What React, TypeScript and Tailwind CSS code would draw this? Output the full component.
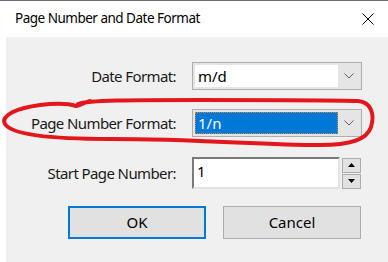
import React from "react";

const font = { fontFamily: '"Noto Sans", "Open Sans", sans-serif' };

function Chevron() {
  return (
    <svg width="10" height="6" viewBox="0 0 10 6" className="block">
      <path d="M0.5 0.5 L5 5 L9.5 0.5" fill="none" stroke="#606060" strokeWidth="1" />
    </svg>
  );
}

function Combo({ value, focused }: { value: string; focused?: boolean }) {
  return (
    <div className="flex h-[28px] w-[170px] border border-[#adadad] bg-[#e5e5e5] p-[2px]">
      {focused ? (
        <div className="flex h-full w-[143px] items-center border border-dotted border-[#d9883a] bg-[#0078d7] pl-[2px] text-white">
          {value}
        </div>
      ) : (
        <div className="flex h-full w-[143px] items-center bg-white pl-[3px] text-black">{value}</div>
      )}
      <div className="flex flex-1 items-center justify-center">
        <Chevron />
      </div>
    </div>
  );
}

function SpinButton({ up }: { up?: boolean }) {
  return (
    <div className="flex h-[15px] w-[19px] items-center justify-center border border-[#adadad] bg-[#e1e1e1]">
      <svg width="7" height="4" viewBox="0 0 7 4" className="block">
        {up ? <path d="M0 4 L3.5 0 L7 4 Z" fill="#000" /> : <path d="M0 0 L7 0 L3.5 4 Z" fill="#000" />}
      </svg>
    </div>
  );
}

export default function App() {
  return (
    <div className="relative h-[262px] w-[388px] overflow-hidden bg-white text-[15px] leading-none text-[#1a1a1a]" style={font}>
      <div className="h-px bg-[#6f6f6f]" />
      <div className="flex h-[36px] items-center justify-between pl-[15px] pr-[14px]">
        <span className="text-[13.5px] tracking-[-0.5px] text-black">Page Number and Date Format</span>
        <svg width="12" height="12" viewBox="0 0 12 12" className="block">
          <path d="M0.5 0.5 L11.5 11.5 M11.5 0.5 L0.5 11.5" stroke="#000" strokeWidth="1" />
        </svg>
      </div>
      <div className="ml-[6px] h-[225px] bg-[#f0f0f0] pt-[25px]">
        <div className="flex h-[28px] items-center gap-[16px]">
          <span className="w-[170px] text-right tracking-[-0.6px]">Date Format:</span>
          <Combo value="m/d" />
        </div>
        <div className="mt-[19px] flex h-[28px] items-center gap-[16px]">
          <span className="w-[170px] text-right tracking-[-0.6px]">Page Number Format:</span>
          <Combo value="1/n" focused />
        </div>
        <div className="mt-[20px] flex h-[32px] items-center gap-[16px]">
          <span className="w-[170px] text-right tracking-[-0.6px]">Start Page Number:</span>
          <div className="flex items-center gap-[2px]">
            <div className="h-[32px] w-[148px] border-2 border-b-[#e3e3e3] border-l-[#7a7a7a] border-r-[#e3e3e3] border-t-[#7a7a7a] bg-white pl-[3px] pt-[5px] text-black">
              1
            </div>
            <div className="flex flex-col gap-[1px]">
              <SpinButton up />
              <SpinButton />
            </div>
          </div>
        </div>
        <div className="mt-[17px] flex gap-[17px] pl-[62px]">
          <button className="flex h-[33px] w-[138px] items-center justify-center border-2 border-[#0078d7] bg-[#e1e1e1] text-black">
            OK
          </button>
          <button className="flex h-[33px] w-[138px] items-center justify-center border border-[#adadad] bg-[#e1e1e1] text-black">
            Cancel
          </button>
        </div>
      </div>
      <svg className="pointer-events-none absolute left-0 top-0" width="388" height="262" viewBox="0 0 388 262">
        <path
          d="M78 104 C 88 100, 130 100, 200 100 C 270 100, 330 100, 358 101 C 371 102, 375 114, 371 127 C 367 140, 350 145, 320 145 C 260 145, 200 139, 110 139 C 55 139, 12 135, 5 124 C 0 115, 18 108, 40 105 C 58 103, 70 104, 76 106 C 80 106, 82 103, 90 101"
          fill="none"
          stroke="#e3161c"
          strokeWidth="4"
          strokeLinecap="round"
        />
      </svg>
    </div>
  );
}
